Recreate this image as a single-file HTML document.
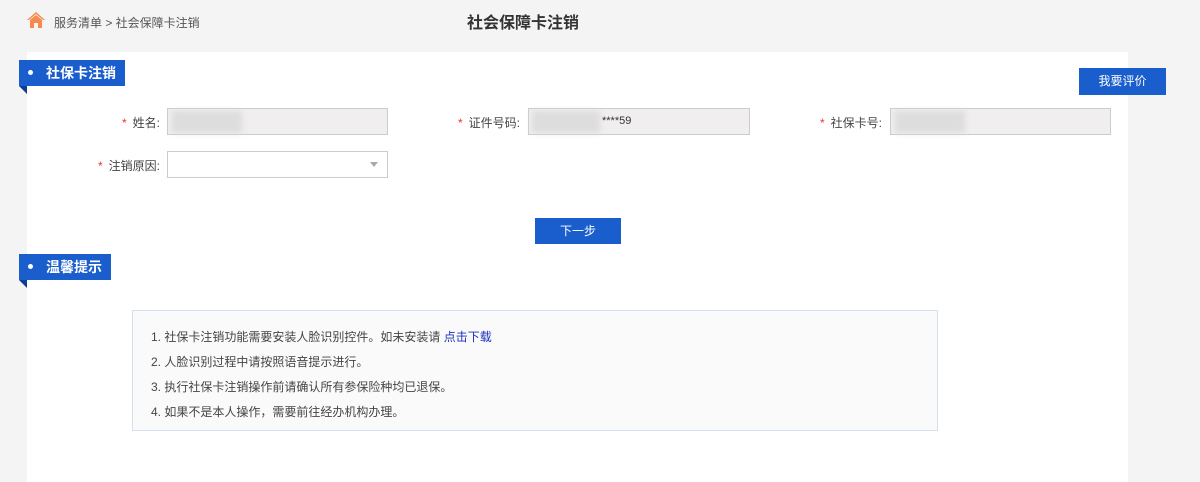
<!DOCTYPE html>
<html><head><meta charset="utf-8"><style>
*{margin:0;padding:0;box-sizing:border-box}
body{width:1200px;height:477px;background:#f4f4f4;font-family:"Liberation Sans","Noto Sans CJK SC",sans-serif;font-size:12px;color:#333;position:relative;overflow:hidden}
.abs{position:absolute}
.panel{left:27px;top:52px;width:1101px;height:430px;background:#fff}
.tag{background:#1a5dcc;color:#fff;font-size:14px;font-weight:bold;height:26px;line-height:26px;padding-left:27px}
.tag:before{content:"";position:absolute;left:9px;top:10px;width:5px;height:5px;border-radius:50%;background:#fff}
.fold{width:0;height:0;border-top:8px solid #0e3f94;border-left:8px solid transparent}
.lbl{font-size:12px;color:#444;text-align:right}
.lbl b{color:#e33;font-weight:normal;margin-right:6px}
.inp{height:27px;border:1px solid #ccc;background:#f0eeee}
.btn{background:#1a5dcc;color:#fff;text-align:center;font-size:12px}
.blur{background:#d8d8d8;filter:blur(3px)}
</style></head><body>
<svg class="abs" style="left:26px;top:11px" width="20" height="18" viewBox="0 0 20 18"><path d="M10 1 L1 9 L3 9 L10 3 L17 9 L19 9 Z" fill="#f58a4c"/><path d="M4 9 L10 4 L16 9 V17 H12 V12 H8 V17 H4 Z" fill="#f58a4c"/></svg>
<div class="abs" style="left:54px;top:14px;font-size:12px;color:#555">服务清单 &gt; 社会保障卡注销</div>
<div class="abs" style="left:467px;top:9px;font-size:16px;font-weight:bold;color:#333">社会保障卡注销</div>
<div class="abs panel"></div>
<div class="abs tag" style="left:19px;top:60px;width:106px">社保卡注销</div>
<div class="abs fold" style="left:19px;top:86px"></div>
<div class="abs btn" style="left:1079px;top:68px;width:87px;height:27px;line-height:27px">我要评价</div>

<div class="abs lbl" style="left:60px;top:114px;width:100px"><b>*</b>姓名:</div>
<div class="abs inp" style="left:167px;top:108px;width:221px"></div>
<div class="abs blur" style="left:172px;top:111px;width:70px;height:22px;background:#ddd"></div>
<div class="abs lbl" style="left:420px;top:114px;width:100px"><b>*</b>证件号码:</div>
<div class="abs inp" style="left:528px;top:108px;width:222px"></div>
<div class="abs blur" style="left:532px;top:111px;width:68px;height:22px;background:#ddd"></div>
<div class="abs" style="left:602px;top:115px;font-size:11px">****59</div>
<div class="abs lbl" style="left:780px;top:114px;width:102px"><b>*</b>社保卡号:</div>
<div class="abs inp" style="left:890px;top:108px;width:221px"></div>
<div class="abs blur" style="left:895px;top:111px;width:70px;height:22px;background:#ddd"></div>
<div class="abs lbl" style="left:60px;top:157px;width:100px"><b>*</b>注销原因:</div>
<div class="abs inp" style="left:167px;top:151px;width:221px;background:#fff"></div>
<div class="abs" style="left:370px;top:162px;width:0;height:0;border-left:4px solid transparent;border-right:4px solid transparent;border-top:5px solid #aaa"></div>

<div class="abs btn" style="left:535px;top:218px;width:86px;height:26px;line-height:26px">下一步</div>

<div class="abs tag" style="left:19px;top:254px;width:92px">温馨提示</div>
<div class="abs fold" style="left:19px;top:280px"></div>

<div class="abs" style="left:132px;top:310px;width:806px;height:121px;background:#fafafa;border:1px solid #d3e1ef;padding:14px 0 0 18px;font-size:12px;color:#444;line-height:25px">
<div>1. 社保卡注销功能需要安装人脸识别控件。如未安装请 <span style="color:#1c2fc0">点击下载</span></div>
<div>2. 人脸识别过程中请按照语音提示进行。</div>
<div>3. 执行社保卡注销操作前请确认所有参保险种均已退保。</div>
<div>4. 如果不是本人操作，需要前往经办机构办理。</div>
</div>
</body></html>
